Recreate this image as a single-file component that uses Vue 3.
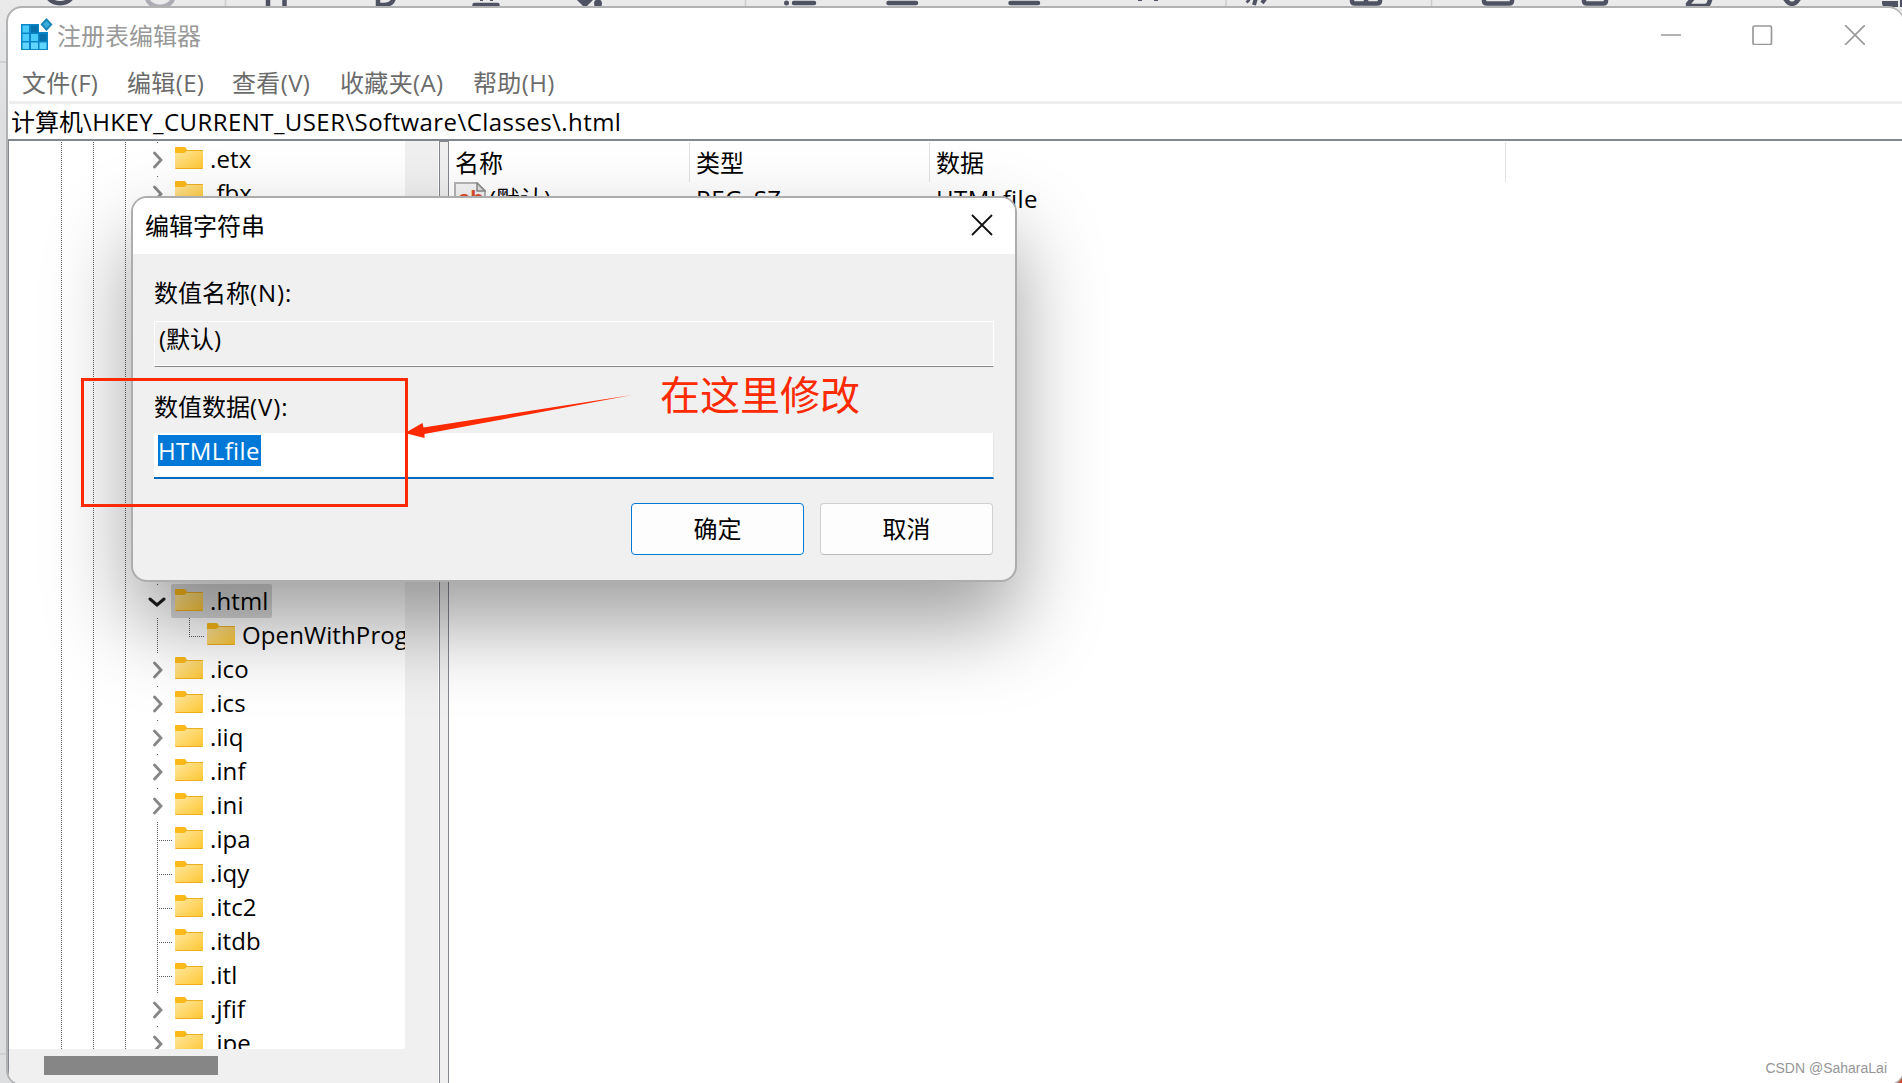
<template>
  <div class="desktop">
    <svg class="toolbar" width="1902" height="8" viewBox="0 0 1902 8">
      <g fill="none" stroke="#4f5263" stroke-width="4.5">
        <path d="M48 -3A13 10 0 0 0 72 -3" />
        <path d="M147 -3A13 10 0 0 0 173 -3" stroke="#acacb4" />
        <path d="M268 -4V7M284.500 -4V7" />
        <path d="M378 -4V5H384Q393 5 394 -3" />
        <path d="M474.500 5H497.500" stroke-linecap="round" />
        <path d="M480 0H483M490 0H493" stroke-width="2" />
        <path d="M794 3H814M888.500 3H916M1010.500 3H1038" stroke-linecap="round" />
        <path d="M1138 0H1142M1154 0H1158" stroke-width="2" />
        <path d="M1247 0L1249 2M1254 5L1256 -2M1262 3L1265 -1" stroke-width="4" />
        <path d="M1352 -4V1Q1352 3.500 1355 3.500H1377Q1380 3.500 1380 1V-4M1366 -4V3" />
        <path d="M1484 -4V1Q1484 3.500 1487 3.500H1509Q1512 3.500 1512 1V-4" />
        <path d="M1584 -4V1Q1584 3.500 1587 3.500H1603Q1606 3.500 1606 1V-4" />
        <path d="M1694 -3L1688 4Q1688 6 1691 6H1705Q1708 6 1709 3L1711 -3" />
        <path d="M1784 -3Q1792 11 1800 -3" />
      </g>
      <g fill="#4f5263">
        <path d="M577 0H593L585 8Z" />
        <circle cx="598" cy="3.500" r="4" />
        <circle cx="786.500" cy="3" r="2.500" />
        <path d="M1882 1H1898V7H1886Q1882 7 1882 3ZM1900 0H1902V7H1900Z" />
      </g>
      <path d="M225.500 0V8M745.500 0V8M1226 0V8M1431.500 0V8" stroke="#cbcbcc" stroke-width="1.500" />
    </svg>
    <i class="rule top"></i>
    <i class="rule bottom"></i>
    <i class="corner"></i>

    <div class="window">
      <header class="titlebar">
        <svg width="32" height="34" viewBox="0 0 32 34">
          <path d="M0 6H18V14H27V32H0Z" fill="#0a86c8" />
          <path d="M1.500 7.500H8V14.500H1.500ZM1.500 16H8V23H1.500ZM10 16H17V23H10Z" fill="#4accfb" />
          <path d="M1.500 24.500H8V31H1.500ZM10 24.500H17V31H10ZM18.500 24.500H25.500V31H18.500Z" fill="#62d5ff" />
          <path d="M10 7.500H17V14.500H10ZM18.500 16H25.500V23H18.500Z" fill="#0870ab" />
          <path d="M25.500 0L31.500 6.500L25.500 13L19.500 6.500Z" fill="#1a83b7" />
          <path d="M25.500 3L29 6.500L25.500 10L22 6.500Z" fill="#39aede" />
        </svg>
        <span class="title">注册表编辑器</span>
        <div class="controls">
          <svg width="204" height="20" viewBox="0 0 204 20" fill="none" stroke="#999" stroke-width="1.700">
            <path d="M0 10H20M184 0L204 20M204 0L184 20" />
            <rect x="92" y="1" width="18.500" height="18.500" rx="1.500" />
          </svg>
        </div>
      </header>
      <nav class="menu">
        <span v-for="item in menu" :key="item.text" :style="{ width: item.width + 'px' }">{{ item.text }}</span>
      </nav>
      <div class="address">计算机<span class="path">\HKEY_CURRENT_USER\Software\Classes\.html</span></div>

      <div class="panes">
        <div class="tree-pane">
          <div class="tree-view">
            <ul class="tree">
              <li v-for="(key, index) in keys" :key="index" :class="['node', key.type]">
                <i class="guide g1"></i><i class="guide g2"></i><i class="guide g3"></i><i class="guide g4"></i>
                <i v-if="key.type === 'leaf' || key.type === 'child'" class="branch"></i>
                <i v-if="key.type === 'child'" class="elbow"></i>
                <span class="toggle">
                  <svg v-if="key.type === 'closed'" width="10" height="18" viewBox="0 0 10 18">
                    <path d="M1.500 2L8 9L1.500 16" fill="none" stroke="#868686" stroke-width="2.800" stroke-linecap="round" />
                  </svg>
                  <svg v-if="key.type === 'open'" class="down" width="18" height="10" viewBox="0 0 18 10">
                    <path d="M2 2L9 8L16 2" fill="none" stroke="#1c1c1c" stroke-width="3" stroke-linecap="round" />
                  </svg>
                </span>
                <span class="label">
                  <svg width="28" height="22" viewBox="0 0 28 22">
                    <defs>
                      <linearGradient id="folder" x1="0" y1="0" x2="1" y2="1">
                        <stop offset="0" stop-color="#ffe8a0" />
                        <stop offset="1" stop-color="#fec632" />
                      </linearGradient>
                    </defs>
                    <rect y="3" width="28" height="19" rx="1" fill="url(#folder)" />
                    <path d="M10 3.500H28M.5 21.500H27.500" stroke="#eeae22" />
                    <path d="M0 1Q0 0 1 0H9.500Q11 0 12 3Q11 6 9 6H0Z" fill="#fbb91a" />
                  </svg>
                  <span>{{ key.name }}</span>
                </span>
              </li>
            </ul>
            <div class="v-scroll"></div>
          </div>
          <div class="h-scroll"><div class="thumb"></div></div>
        </div>
        <div class="splitter"></div>
        <div class="list">
          <div class="row head">
            <span class="c1">名称</span><span class="c2">类型</span><span class="c3">数据</span>
          </div>
          <div class="row">
            <span class="c1 value">
              <svg width="32" height="34" viewBox="0 0 32 34">
                <path d="M1 1H23L31 9V33H1Z" fill="#f4f4f4" stroke="#b5b5b5" stroke-width="2" />
                <path d="M23 1V9H31Z" fill="#ddd" stroke="#8b8b8b" stroke-width="1.500" />
                <text x="4" y="24" class="ab">ab</text>
              </svg>
              (默认)
            </span>
            <span class="c2 latin">REG_SZ</span><span class="c3 latin">HTMLfile</span>
          </div>
        </div>
      </div>
    </div>

    <div class="dialog">
      <header class="dialog-title">
        编辑字符串
        <svg width="22" height="22" viewBox="0 0 22 22">
          <path d="M1 1L21 21M21 1L1 21" stroke="#111" stroke-width="1.800" />
        </svg>
      </header>
      <div class="dialog-body">
        <label>数值名称<span>(N):</span></label>
        <div class="field readonly">(默认)</div>
        <label class="second">数值数据<span>(V):</span></label>
        <div class="field active"><span class="selected latin">{{ valueData }}</span></div>
        <div class="buttons">
          <button class="primary">确定</button>
          <button>取消</button>
        </div>
      </div>
    </div>

    <div class="mark"></div>
    <svg class="arrow" width="230" height="50" viewBox="0 0 230 50">
      <path d="M2 43L19.500 33L20.500 37.500L229 5L21.500 44L21.500 48Z" fill="#ff2a00" />
    </svg>
    <div class="note">在这里修改</div>
    <div class="watermark">CSDN @SaharaLai</div>
  </div>
</template>

<script setup>
import { ref } from 'vue'

const valueData = ref('HTMLfile')

const menu = [
  { text: '文件(F)', width: 105 },
  { text: '编辑(E)', width: 105 },
  { text: '查看(V)', width: 108 },
  { text: '收藏夹(A)', width: 133 },
  { text: '帮助(H)', width: 100 }
]

// closed / open: has subkeys, leaf: no subkeys, child: one level deeper
const keys = [
  { name: '.etx', type: 'closed' },
  { name: '.fbx', type: 'closed' },
  // rows behind the dialog
  ...Array.from({ length: 11 }, () => ({ name: '', type: 'closed' })),
  { name: '.html', type: 'open' },
  { name: 'OpenWithProgids', type: 'child' },
  { name: '.ico', type: 'closed' },
  { name: '.ics', type: 'closed' },
  { name: '.iiq', type: 'closed' },
  { name: '.inf', type: 'closed' },
  { name: '.ini', type: 'closed' },
  { name: '.ipa', type: 'leaf' },
  { name: '.iqy', type: 'leaf' },
  { name: '.itc2', type: 'leaf' },
  { name: '.itdb', type: 'leaf' },
  { name: '.itl', type: 'leaf' },
  { name: '.jfif', type: 'closed' },
  { name: '.jpe', type: 'closed' }
]
</script>

<style>
body {
  margin: 0;
  overflow: hidden;
}
</style>

<style scoped>
* {
  box-sizing: border-box;
}

.desktop {
  position: relative;
  width: 1902px;
  height: 1083px;
  overflow: hidden;
  background: linear-gradient(#eaeaeb, #dcdee0 120px);
  font-family: "Open Sans", "Noto Sans CJK SC", sans-serif;
  font-size: 24px;
  line-height: 34px;
  color: #000;
  white-space: nowrap;
}

.toolbar {
  display: block;
}

.rule {
  position: absolute;
  left: 0;
  width: 9px;
  height: 2px;
  background: #cfd0d2;
}

.rule.top {
  top: 61px;
}

.rule.bottom {
  top: 1053px;
}

.corner {
  position: absolute;
  right: 0;
  bottom: 0;
  width: 14px;
  height: 14px;
  background: #c94f37;
}

.window {
  position: absolute;
  left: 6px;
  top: 6px;
  width: 1898px;
  height: 1080px;
  padding: 0 1px;
  display: flex;
  flex-direction: column;
  overflow: hidden;
  background: #fff;
  border: 2px solid #b2b2b2;
  border-right-width: 1px;
  border-radius: 16px;
}

.titlebar {
  height: 54px;
  padding: 0 37px 0 12px;
  display: flex;
  align-items: center;
}

.titlebar > svg {
  margin-bottom: 0;
}

.title {
  margin: 2px 0 0 4px;
  color: #999;
}

.controls {
  margin-left: auto;
  display: flex;
}

.menu {
  height: 39px;
  padding: 2px 0 0 13px;
  display: flex;
  align-items: center;
  color: #6b6b6b;
  letter-spacing: 0.35px;
}

.address {
  height: 38px;
  padding-left: 2px;
  border-top: 3px solid #eee;
  line-height: 36px;
}

.path {
  letter-spacing: 0.43px;
}

.latin {
  letter-spacing: 0.4px;
}

.panes {
  flex: 1;
  display: flex;
  min-height: 0;
  margin-left: -1px;
  border-top: 2px solid #828790;
  border-left: 1px solid #828790;
}

.tree-pane {
  width: 430px;
  display: flex;
  flex-direction: column;
  background: #f0f0f0;
  border-right: 1px solid #fff;
}

.tree-view {
  height: 908px;
  display: flex;
  overflow: hidden;
}

.tree {
  width: 396px;
  margin: 0;
  padding: 1px 0 0;
  list-style: none;
  overflow: hidden;
  background: #fff;
  border-bottom-right-radius: 3px;
}

.v-scroll {
  flex: 1;
  background: #f0f0f0;
}

.node {
  position: relative;
  height: 34px;
  padding-left: 139px;
  display: flex;
}

.guide {
  position: absolute;
  top: 0;
  width: 1px;
  height: 34px;
  background: repeating-linear-gradient(#5c5c5c 0 1px, transparent 1px 2px);
}

.g1 { left: 52px; }
.g2 { left: 84px; }
.g3 { left: 116px; }
.g4 { left: 148px; }

.closed .g4,
.open .g4 {
  height: 1px;
}

.branch {
  position: absolute;
  left: 150px;
  top: 18px;
  width: 14px;
  height: 1px;
  background: repeating-linear-gradient(90deg, #5c5c5c 0 1px, transparent 1px 2px);
}

.elbow {
  position: absolute;
  left: 180px;
  top: 0;
  width: 1px;
  height: 18px;
  background: repeating-linear-gradient(#5c5c5c 0 1px, transparent 1px 2px);
}

.toggle {
  flex-shrink: 0;
  width: 23px;
  display: flex;
  align-items: center;
  padding: 2px 0 0 5px;
}

.toggle .down {
  margin-left: -5px;
}

.label {
  flex-shrink: 0;
  height: 34px;
  padding: 0 4px;
  display: flex;
  border-radius: 2px;
}

.label svg {
  margin: 5px 7px 0 0;
}

.label span {
  line-height: 33px;
  letter-spacing: 0.1px;
}

.open .label {
  background: #d9d9d9;
}

.child .label {
  margin-left: 32px;
}

.child .branch {
  left: 180px;
  width: 16px;
}

.h-scroll {
  padding: 7px 0 0 35px;
}

.thumb {
  width: 174px;
  height: 19px;
  background: #868686;
}

.splitter {
  width: 10px;
  background: #f0f0f0;
  border: 1px solid #828790;
}

.list {
  flex: 1;
}

.row {
  display: flex;
  height: 34px;
}

.row.head {
  height: 41px;
  padding-top: 1px;
  line-height: 42px;
}

.c1 {
  width: 241px;
  padding-left: 6px;
}

.c2 {
  width: 240px;
  padding-left: 6px;
}

.c3 {
  width: 576px;
  padding-left: 6px;
}

.head span {
  border-right: 1px solid #e2e2e2;
}

.value {
  display: flex;
  padding-left: 5px;
  gap: 3px;
}

.ab {
  font-family: "Liberation Sans", sans-serif;
  font-size: 22px;
  font-weight: bold;
  fill: #d9502d;
}

.dialog {
  position: absolute;
  left: 131px;
  top: 196px;
  width: 886px;
  height: 386px;
  overflow: hidden;
  background: #f0f0f0;
  border: 2px solid #adadad;
  border-radius: 16px;
  box-shadow: 0 42px 84px rgba(0, 0, 0, 0.38);
}

.dialog-title {
  height: 56px;
  padding: 0 22px 0 12px;
  display: flex;
  align-items: center;
  justify-content: space-between;
  background: #fff;
}

.dialog-title svg {
  margin-bottom: 2px;
}

.dialog-body {
  padding: 22px 22px 0 21px;
}

label {
  display: block;
}

label span {
  letter-spacing: 0.9px;
}

.field {
  width: 840px;
  height: 46px;
  margin-top: 11px;
  padding: 0 4px;
}

.readonly {
  border: 1px solid #fff;
  border-bottom-color: #868686;
  box-shadow: inset 0 -1px #fff;
}

.second {
  margin-top: 23px;
}

.active {
  margin-top: 9px;
  padding: 2px 4px;
  background: #fff;
  border: 1px solid #e6e6e6;
  border-width: 0 1px 2px 0;
  border-bottom-color: #0067c0;
}

.selected {
  display: block;
  width: 103px;
  height: 31px;
  line-height: 31px;
  background: #0078d7;
  color: #fff;
}

.buttons {
  margin-top: 24px;
  display: flex;
  justify-content: flex-end;
  gap: 16px;
}

button {
  width: 173px;
  height: 52px;
  padding: 0;
  font: inherit;
  background: #fdfdfd;
  border: 1px solid #d0d0d0;
  border-bottom-color: #bababa;
  border-radius: 4px;
}

.primary {
  border-color: #0078d4;
}

.mark {
  position: absolute;
  left: 81px;
  top: 378px;
  width: 327px;
  height: 129px;
  border: 3px solid #ff2a00;
}

.arrow {
  position: absolute;
  left: 403px;
  top: 390px;
}

.note {
  position: absolute;
  left: 660px;
  top: 370px;
  font-size: 40px;
  line-height: 50px;
  color: #ff2a00;
}

.watermark {
  position: absolute;
  right: 15px;
  bottom: 5px;
  font-family: "Liberation Sans", sans-serif;
  font-size: 14px;
  line-height: 20px;
  color: #969696;
}
</style>
